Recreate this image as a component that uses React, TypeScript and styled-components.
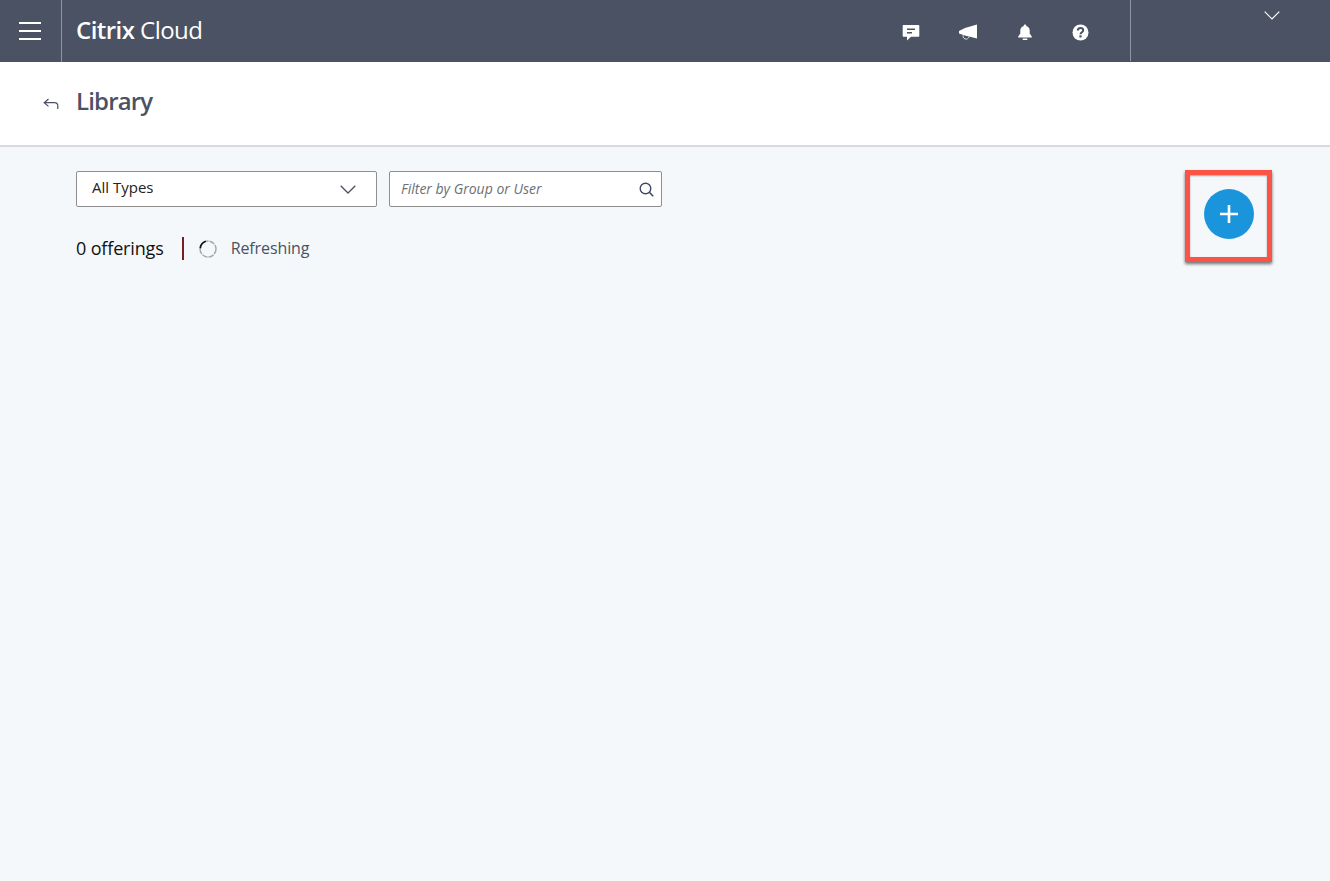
import styled, { createGlobalStyle } from 'styled-components';

const GlobalStyle = createGlobalStyle`
  html, body {
    margin: 0;
    padding: 0;
    height: 100%;
    background: #f4f8fb;
  }
  #root {
    height: 100%;
  }
`;

export default function App() {
  return (
    <Page>
      <GlobalStyle />
      <TopBar>
        <MenuButton aria-label="Menu">
          <MenuLine />
          <MenuLine />
          <MenuLine />
        </MenuButton>
        <Brand>
          <strong>Citrix</strong> Cloud
        </Brand>
        <TopIcons>
          <TopIcon>
            <svg width="18" height="17" viewBox="0 0 18 17">
              <path
                fill="#fff"
                fillRule="evenodd"
                d="M1.5 1H16.5a.8.8 0 0 1 .8.8V12a.8.8 0 0 1-.8.8H9L5 16.5V12.800H1.500a.8.8 0 0 1-.8-.8V1.800a.8.8 0 0 1 .8-.8ZM5 4.500V6H13V4.500ZM5 8V9.500H10V8Z"
              />
            </svg>
          </TopIcon>
          <TopIcon>
            <svg width="20" height="17" viewBox="0 0 20 17">
              <path fill="#fff" d="M19 .5V14.500L7 11.500 1 9.500V7L7 4Z" />
              <path fill="none" stroke="#fff" strokeWidth="1" d="M5.500 10.500a3 3 0 1 0 5.500 2" opacity="0.75" />
            </svg>
          </TopIcon>
          <TopIcon>
            <svg width="16" height="17" viewBox="0 0 16 17">
              <path
                fill="#fff"
                d="M8 .5a1.300 1.300 0 0 1 1.300 1.400C11.500 2.500 12.700 4.300 12.700 6.500V9.500L14.800 12.500V13.500H1.200V12.500L3.300 9.500V6.500C3.300 4.300 4.500 2.500 6.700 1.900A1.300 1.300 0 0 1 8 .5Z"
              />
              <rect x="5.500" y="14.500" width="5" height="1.500" rx="0.7" fill="#fff" />
            </svg>
          </TopIcon>
          <TopIcon>
            <svg width="17" height="17" viewBox="0 0 17 17">
              <circle cx="8.500" cy="8.500" r="8" fill="#fff" />
              <path
                fill="none"
                stroke="#4a5263"
                strokeWidth="2"
                d="M5.800 6.600C5.800 5 7 4.100 8.500 4.100S11.200 5 11.200 6.400C11.200 8.200 8.500 8.300 8.500 10.200"
              />
              <rect x="7.400" y="11.300" width="2.200" height="2.200" fill="#4a5263" />
            </svg>
          </TopIcon>
        </TopIcons>
        <AccountArea>
          <svg width="16" height="9" viewBox="0 0 16 9">
            <path fill="none" stroke="#fff" strokeWidth="1.200" d="M.7.700 8 8 15.300.7" />
          </svg>
        </AccountArea>
      </TopBar>

      <TitleBar>
        <BackIcon width="16" height="12" viewBox="0 0 16 12">
          <path
            fill="none"
            stroke="#4a5263"
            strokeWidth="1.200"
            d="M5.500 1 1.200 4.700 5.500 8.400M1.200 4.700H11.500C13.500 4.700 14.800 6 14.800 8V11"
          />
        </BackIcon>
        <Title>Library</Title>
      </TitleBar>

      <Content>
        <LeftColumn>
          <Filters>
            <SelectBox>
              <span>All Types</span>
              <svg width="16" height="9" viewBox="0 0 16 9">
                <path fill="none" stroke="#4a5263" strokeWidth="1.300" d="M.7.700 8 8 15.300.7" />
              </svg>
            </SelectBox>
            <SearchBox>
              <SearchPlaceholder>Filter by Group or User</SearchPlaceholder>
              <svg width="15" height="15" viewBox="0 0 15 15">
                <circle cx="6.500" cy="6.500" r="5.300" fill="none" stroke="#3d4a5f" strokeWidth="1.400" />
                <path stroke="#3d4a5f" strokeWidth="1.600" d="M10.300 10.300 14.200 14.200" />
              </svg>
            </SearchBox>
          </Filters>
          <StatusRow>
            <Count>0 offerings</Count>
            <StatusDivider />
            <Spinner width="18" height="18" viewBox="0 0 18 18">
              <circle cx="9" cy="9" r="8" fill="none" stroke="#a9a9a9" strokeWidth="1.500" strokeDasharray="5.500 1" />
              <path fill="none" stroke="#111" strokeWidth="1.600" d="M1.300 8.500A8 8 0 0 1 6.800 1.300" />
            </Spinner>
            <Refreshing>Refreshing</Refreshing>
          </StatusRow>
        </LeftColumn>
        <Highlight>
          <AddButton aria-label="Add">
            <svg width="18" height="18" viewBox="0 0 18 18">
              <path stroke="#fff" strokeWidth="2.600" d="M9 0V18M0 9H18" />
            </svg>
          </AddButton>
        </Highlight>
      </Content>
    </Page>
  );
}

/* Layout */

const Page = styled.div`
  display: flex;
  flex-direction: column;
  height: 881px;
  overflow: hidden;
  background: #f4f8fb;
  font-family: 'Open Sans', 'Noto Sans', sans-serif;
  -webkit-font-smoothing: antialiased;
`;

/* Top bar */

const TopBar = styled.header`
  display: flex;
  flex-shrink: 0;
  height: 62px;
  background: #4a5263;
  color: #fff;
`;

const MenuButton = styled.button`
  display: flex;
  flex-direction: column;
  justify-content: center;
  gap: 5.5px;
  width: 62px;
  height: 62px;
  padding: 0 19px;
  background: none;
  border: none;
  border-right: 1px solid #8e94a0;
`;

const MenuLine = styled.span`
  display: block;
  width: 22px;
  height: 2.5px;
  background: #fff;
`;

const Brand = styled.div`
  margin-left: 14px;
  font-size: 24px;
  line-height: 60px;
  letter-spacing: -0.55px;
  font-weight: 400;
  white-space: nowrap;

  strong {
    font-weight: 600;
  }
`;

const TopIcons = styled.div`
  display: flex;
  align-items: center;
  margin-left: auto;
  padding-top: 2px;
  gap: 37px;
`;

const TopIcon = styled.span`
  display: flex;
  justify-content: center;
  width: 20px;

  &:last-child {
    margin-left: -2px;
  }
`;

const AccountArea = styled.div`
  display: flex;
  justify-content: flex-end;
  align-items: flex-start;
  width: 200px;
  height: 61px;
  margin-left: 40px;
  padding: 11px 50px 0 0;
  box-sizing: border-box;
  border-left: 1px solid #8e94a0;
`;

/* Title bar */

const TitleBar = styled.div`
  display: flex;
  flex-shrink: 0;
  align-items: center;
  height: 83px;
  padding-left: 43px;
  background: #fff;
  border-bottom: 2px solid #d8dae0;
`;

const BackIcon = styled.svg`
  margin-top: 0;
`;

const Title = styled.h1`
  margin: -6px 0 0 17px;
  font-size: 24px;
  font-weight: 600;
  line-height: 32px;
  letter-spacing: -0.85px;
  color: #4a5263;
`;

/* Content */

const Content = styled.main`
  display: flex;
  justify-content: space-between;
  align-items: flex-start;
  padding: 24px 58px 0 76px;
`;

const LeftColumn = styled.div`
  display: flex;
  flex-direction: column;
`;

const Filters = styled.div`
  display: flex;
  gap: 12px;
`;

const SelectBox = styled.div`
  display: flex;
  align-items: center;
  justify-content: space-between;
  box-sizing: border-box;
  width: 301px;
  height: 36px;
  padding: 0 20px 0 15px;
  background: #fff;
  border: 1px solid #8f8f8f;
  border-radius: 2px;
  font-size: 15px;
  letter-spacing: 0;
  color: #222;

  span {
    margin-top: -4px;
  }
`;

const SearchBox = styled.div`
  display: flex;
  align-items: center;
  justify-content: space-between;
  box-sizing: border-box;
  width: 273px;
  height: 36px;
  padding: 0 7px 0 11px;
  background: #fff;
  border: 1px solid #8f8f8f;
  border-radius: 2px;
`;

const SearchPlaceholder = styled.span`
  margin-top: -2px;
  font-size: 14px;
  font-style: italic;
  letter-spacing: 0;
  color: #6b6f76;
`;

const StatusRow = styled.div`
  display: flex;
  align-items: center;
  height: 24px;
  margin-top: 29px;
`;

const Count = styled.span`
  font-size: 18px;
  letter-spacing: -0.15px;
  color: #111;
`;

const StatusDivider = styled.span`
  width: 2px;
  height: 23px;
  margin-left: 18px;
  background: #7a1f1f;
`;

const Spinner = styled.svg`
  margin: 2px 0 0 15px;
`;

const Refreshing = styled.span`
  margin-left: 14px;
  font-size: 16px;
  font-weight: 500;
  letter-spacing: -0.1px;
  color: #4a5263;
`;

const Highlight = styled.div`
  display: flex;
  align-items: center;
  justify-content: center;
  box-sizing: border-box;
  width: 87px;
  height: 92px;
  margin-top: -1px;
  padding-bottom: 4px;
  border: 5px solid #fb5447;
  box-shadow: 0 2px 3px rgba(0, 0, 0, 0.55), inset 0 1px 2px rgba(0, 0, 0, 0.35);
`;

const AddButton = styled.button`
  display: flex;
  align-items: center;
  justify-content: center;
  width: 50px;
  height: 50px;
  padding: 0;
  background: #1a95dc;
  border: none;
  border-radius: 50%;
`;
